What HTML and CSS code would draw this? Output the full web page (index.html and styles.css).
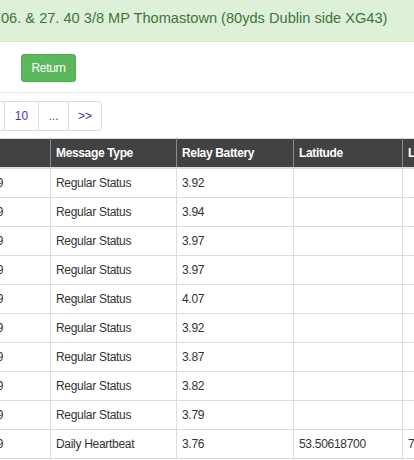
FILE: index.html
```html
<!DOCTYPE html>
<html>
<head>
<meta charset="utf-8">
<title>Relay Messages</title>
<link rel="stylesheet" href="styles.css">
</head>
<body>
<div class="banner">06. &amp; 27. 40 3/8 MP Thomastown (80yds Dublin side XG43)</div>
<div class="toolbar"><button class="btn-return" type="button">Return</button></div>
<nav class="pager">
  <a class="page">9</a><a class="page">10</a><span class="page gap">...</span><a class="page last">&gt;&gt;</a>
</nav>
<div class="table-wrap">
<table class="grid">
  <colgroup>
    <col class="c-date"><col class="c-type"><col class="c-batt"><col class="c-lat"><col class="c-lon">
  </colgroup>
  <thead>
    <tr><th>Date</th><th>Message Type</th><th>Relay Battery</th><th>Latitude</th><th>Longitude</th></tr>
  </thead>
  <tbody>
    <tr><td>27/06/2019</td><td>Regular Status</td><td>3.92</td><td></td><td></td></tr>
    <tr><td>27/06/2019</td><td>Regular Status</td><td>3.94</td><td></td><td></td></tr>
    <tr><td>27/06/2019</td><td>Regular Status</td><td>3.97</td><td></td><td></td></tr>
    <tr><td>27/06/2019</td><td>Regular Status</td><td>3.97</td><td></td><td></td></tr>
    <tr><td>27/06/2019</td><td>Regular Status</td><td>4.07</td><td></td><td></td></tr>
    <tr><td>27/06/2019</td><td>Regular Status</td><td>3.92</td><td></td><td></td></tr>
    <tr><td>27/06/2019</td><td>Regular Status</td><td>3.87</td><td></td><td></td></tr>
    <tr><td>27/06/2019</td><td>Regular Status</td><td>3.82</td><td></td><td></td></tr>
    <tr><td>27/06/2019</td><td>Regular Status</td><td>3.79</td><td></td><td></td></tr>
    <tr><td>27/06/2019</td><td>Daily Heartbeat</td><td>3.76</td><td>53.50618700</td><td>7.12345600</td></tr>
  </tbody>
</table>
</div>
</body>
</html>
```

FILE: styles.css
```css
html, body {
  margin: 0;
  padding: 0;
  background: #ffffff;
}

body {
  font-family: "Liberation Sans", Arial, sans-serif;
  color: #333333;
  font-size: 12px;
  overflow-x: hidden;
}

.banner {
  box-sizing: border-box;
  height: 42px;
  padding: 8px 0 0 1px;
  background: #dff0d8;
  border-bottom: 1px solid #d6e9c6;
  color: #3c763d;
  font-size: 14.6px;
  line-height: 20px;
  white-space: nowrap;
  overflow: hidden;
}

.toolbar {
  padding: 12px 0 10px 21px;
  border-bottom: 1px solid #e5e5e5;
  display: flex;
}

.btn-return {
  height: 28px;
  width: 55px;
  padding: 0;
  background: #5cb85c;
  border: 1px solid #4cae4c;
  border-radius: 3px;
  color: #ffffff;
  font-family: "Liberation Sans", Arial, sans-serif;
  font-size: 12px;
  letter-spacing: -0.3px;
  line-height: 18px;
  cursor: pointer;
}

.pager {
  display: flex;
  margin: 8px 0 0 -30px;
}

.page {
  box-sizing: border-box;
  height: 30px;
  width: 35px;
  display: flex;
  align-items: center;
  justify-content: center;
  border: 1px solid #dddddd;
  background: #ffffff;
  color: #3f35b5;
  font-size: 12px;
  text-decoration: none;
  margin-left: -1px;
}

.page:first-child {
  margin-left: 0;
}

.page.gap {
  width: 31px;
  color: #555555;
}

.page.last {
  width: 34px;
  border-radius: 0 3px 3px 0;
}

.table-wrap {
  margin-top: 7px;
  overflow: hidden;
}

.grid {
  margin-left: -60px;
  width: 582px;
  table-layout: fixed;
  border-collapse: collapse;
  border-spacing: 0;
  font-size: 12px;
  letter-spacing: -0.3px;
  line-height: 18px;
}

.c-date { width: 110px; }
.c-type { width: 126px; }
.c-batt { width: 117px; }
.c-lat { width: 109px; }
.c-lon { width: 120px; }

.grid th {
  background: #424242;
  color: #ffffff;
  font-weight: bold;
  text-align: left;
  padding: 5px;
  letter-spacing: -0.35px;
  border-top: 1px solid #dddddd;
  border-left: 1px solid #8c8c8c;
  border-right: 1px solid #8c8c8c;
  border-bottom: 2px solid #dddddd;
  white-space: nowrap;
}

.grid td {
  padding: 5px;
  border: 1px solid #dddddd;
  color: #333333;
  white-space: nowrap;
  overflow: hidden;
}
```
